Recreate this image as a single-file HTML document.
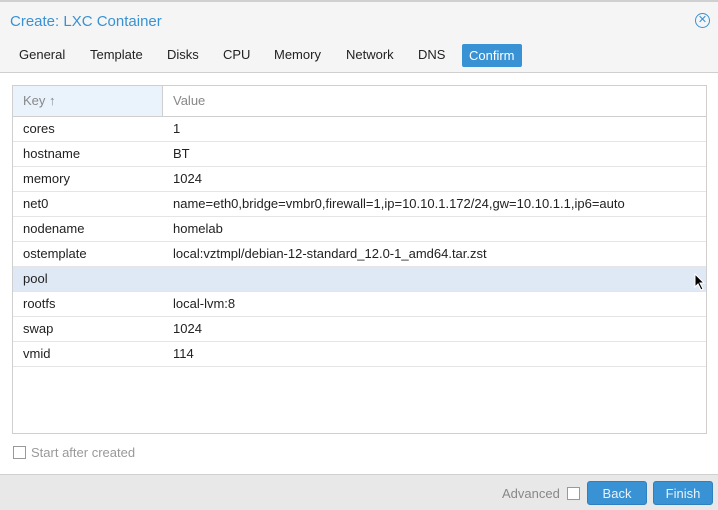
<!DOCTYPE html><html><head><style>
body{margin:0;width:718px;height:509px;overflow:hidden;font-family:"Liberation Sans",sans-serif;font-size:13px;color:#222;background:#fff;position:relative}
.top{position:absolute;left:0;top:0;width:718px;height:73px;background:#f5f5f5;border-top:2px solid #d0d0d0;box-sizing:border-box;border-bottom:1px solid #cfcfcf}
.title{position:absolute;left:10px;top:11px;font-size:15px;color:#3892d4}
.close{position:absolute;right:8px;top:11px;width:13px;height:13px;border:1px solid #3892d4;border-radius:50%;color:#3892d4;font-size:11px;line-height:13px;text-align:center}
.tab{position:absolute;top:43px;height:24px;line-height:24px;font-size:13px;color:#222}
.tab.on{background:#3892d4;color:#fff;padding:0 7px;border-radius:2px}
.grid{position:absolute;left:12px;top:85px;width:695px;height:349px;border:1px solid #cfcfcf;box-sizing:border-box}
.hdr{height:30px;border-bottom:1px solid #cfcfcf;position:relative;color:#666}
.hk{position:absolute;left:0;top:0;width:150px;height:30px;box-sizing:border-box;background:#eaf3fc;border-right:1px solid #cfcfcf;line-height:30px;padding-left:10px;color:#888}
.hv{position:absolute;left:160px;top:0;line-height:30px;color:#888}
.row{height:24px;border-bottom:1px solid #e5e5e5;position:relative;line-height:24px}
.row .k{position:absolute;left:10px}.row .v{position:absolute;left:160px}
.sel{background:#dfe9f5}
.chk{position:absolute;width:11px;height:11px;border:1px solid #999;background:#fff}
.foot{position:absolute;left:0;top:474px;width:718px;height:35px;background:#e8e8e8;border-top:1px solid #d0d0d0}
.btn{position:absolute;top:481px;height:24px;line-height:24px;background:#3892d4;color:#e8f2fb;text-align:center;border-radius:3px;border:1px solid #2f80c0;box-sizing:border-box}
</style></head><body>
<div class="top"><div class="title">Create: LXC Container</div><div class="close">✕</div></div>
<div class="tab" style="left:19px">General</div>
<div class="tab" style="left:90px">Template</div>
<div class="tab" style="left:167px">Disks</div>
<div class="tab" style="left:223px">CPU</div>
<div class="tab" style="left:274px">Memory</div>
<div class="tab" style="left:346px">Network</div>
<div class="tab" style="left:418px">DNS</div>
<div class="tab on" style="left:462px;top:44px;height:23px;line-height:23px">Confirm</div>
<div class="grid">
<div class="hdr"><div class="hk">Key ↑</div><div class="hv">Value</div></div>
<div class="row"><span class="k">cores</span><span class="v">1</span></div>
<div class="row"><span class="k">hostname</span><span class="v">BT</span></div>
<div class="row"><span class="k">memory</span><span class="v">1024</span></div>
<div class="row"><span class="k">net0</span><span class="v">name=eth0,bridge=vmbr0,firewall=1,ip=10.10.1.172/24,gw=10.10.1.1,ip6=auto</span></div>
<div class="row"><span class="k">nodename</span><span class="v">homelab</span></div>
<div class="row"><span class="k">ostemplate</span><span class="v">local:vztmpl/debian-12-standard_12.0-1_amd64.tar.zst</span></div>
<div class="row sel"><span class="k">pool</span><span class="v"></span></div>
<div class="row"><span class="k">rootfs</span><span class="v">local-lvm:8</span></div>
<div class="row"><span class="k">swap</span><span class="v">1024</span></div>
<div class="row"><span class="k">vmid</span><span class="v">114</span></div>
</div>
<div class="chk" style="left:13px;top:446px"></div>
<div style="position:absolute;left:31px;top:445px;color:#999">Start after created</div>
<div class="foot"></div>
<div style="position:absolute;left:502px;top:486px;color:#888">Advanced</div>
<div class="chk" style="left:567px;top:487px"></div>
<div class="btn" style="left:587px;width:60px">Back</div>
<div class="btn" style="left:653px;width:60px">Finish</div>
<svg style="position:absolute;left:694px;top:273px" width="12" height="18"><path d="M1 1 L1 14 L4 11 L7 17 L9 16 L6 10 L10 10 Z" fill="#000" stroke="#fff" stroke-width="1"/></svg>
</body></html>
